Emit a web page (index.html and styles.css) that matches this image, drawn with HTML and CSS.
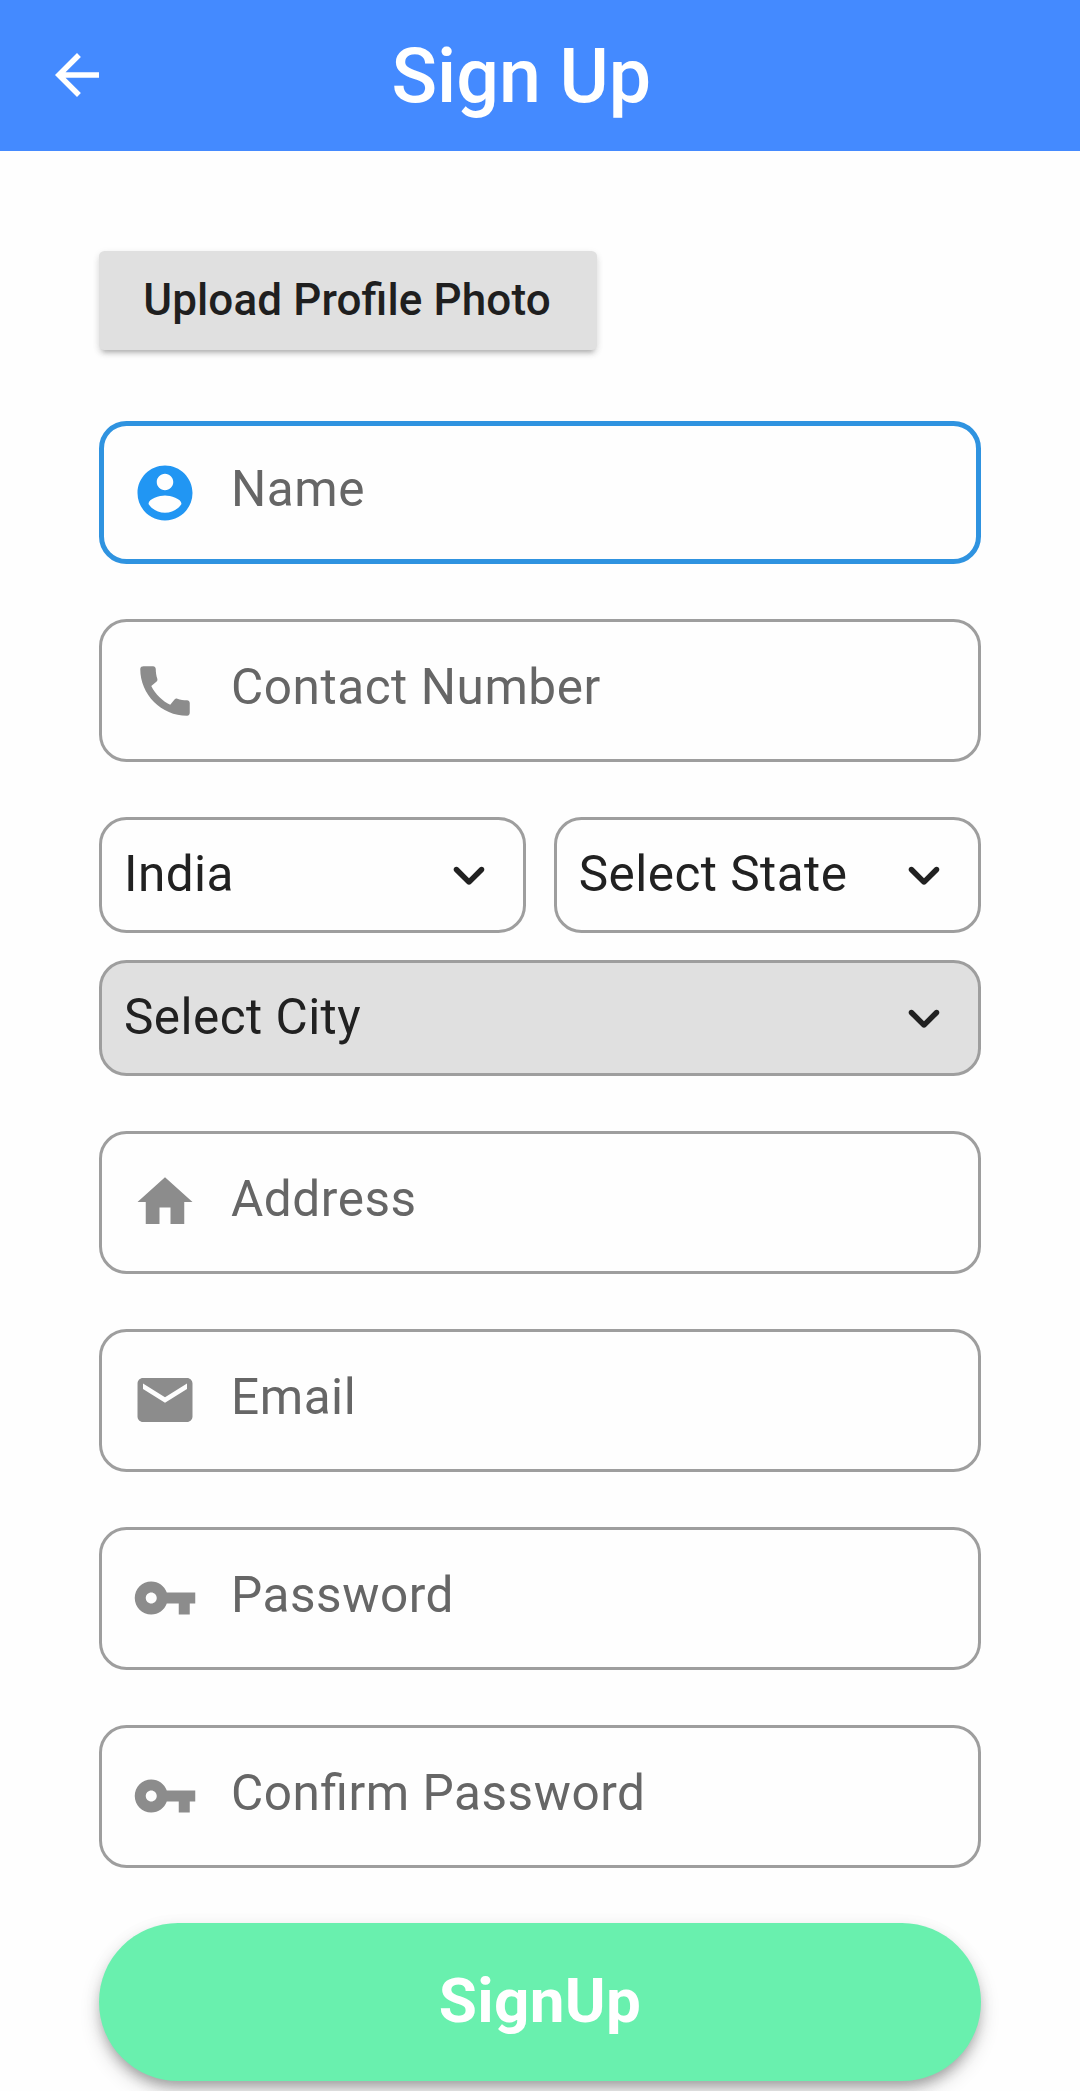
FILE: index.html
```html
<!DOCTYPE html>
<html lang="en">
<head>
<meta charset="utf-8">
<title>Sign Up</title>
<link rel="stylesheet" href="styles.css">
</head>
<body>
<header class="app-bar">
  <svg class="icon back" viewBox="0 0 24 24"><path d="M20 11H7.83l5.59-5.59L12 4l-8 8 8 8 1.41-1.41L7.83 13H20v-2z"/></svg>
  <h1 class="title">Sign Up</h1>
</header>
<main class="form">
  <button class="upload">Upload Profile Photo</button>
  <label class="field focused">
    <svg class="icon" viewBox="0 0 24 24"><path d="M12 2C6.48 2 2 6.48 2 12s4.48 10 10 10 10-4.48 10-10S17.52 2 12 2zm0 3c1.66 0 3 1.34 3 3s-1.34 3-3 3-3-1.34-3-3 1.34-3 3-3zm0 14.2c-2.5 0-4.71-1.28-6-3.22.03-1.99 4-3.08 6-3.08 1.99 0 5.97 1.09 6 3.08-1.29 1.94-3.5 3.22-6 3.22z"/></svg>
    <span class="hint">Name</span>
  </label>
  <label class="field">
    <svg class="icon" viewBox="0 0 24 24"><path d="M20.01 15.38c-1.23 0-2.42-.2-3.53-.56-.35-.12-.74-.03-1.01.24l-1.57 1.97c-2.83-1.35-5.48-3.9-6.89-6.83l1.95-1.66c.27-.28.35-.67.24-1.02-.37-1.11-.56-2.3-.56-3.53 0-.54-.45-.99-.99-.99H4.19C3.65 3 3 3.24 3 3.99 3 13.28 10.73 21 20.01 21c.71 0 .99-.63.99-1.18v-3.45c0-.54-.45-.99-.99-.99z"/></svg>
    <span class="hint">Contact Number</span>
  </label>
  <div class="region">
    <div class="select"><span class="value">India</span><svg class="icon" viewBox="0 0 24 24"><path d="M8.12 9.29L12 13.17l3.88-3.88c.39-.39 1.02-.39 1.41 0 .39.39.39 1.02 0 1.41l-4.59 4.59c-.39.39-1.02.39-1.41 0L6.7 10.7c-.39-.39-.39-1.02 0-1.41.39-.38 1.03-.39 1.42 0z"/></svg></div>
    <div class="select"><span class="value">Select State</span><svg class="icon" viewBox="0 0 24 24"><path d="M8.12 9.29L12 13.17l3.88-3.88c.39-.39 1.02-.39 1.41 0 .39.39.39 1.02 0 1.41l-4.59 4.59c-.39.39-1.02.39-1.41 0L6.7 10.7c-.39-.39-.39-1.02 0-1.41.39-.38 1.03-.39 1.42 0z"/></svg></div>
    <div class="select disabled"><span class="value">Select City</span><svg class="icon" viewBox="0 0 24 24"><path d="M8.12 9.29L12 13.17l3.88-3.88c.39-.39 1.02-.39 1.41 0 .39.39.39 1.02 0 1.41l-4.59 4.59c-.39.39-1.02.39-1.41 0L6.7 10.7c-.39-.39-.39-1.02 0-1.41.39-.38 1.03-.39 1.42 0z"/></svg></div>
  </div>
  <label class="field">
    <svg class="icon" viewBox="0 0 24 24"><path d="M10 20v-6h4v6h5v-8h3L12 3 2 12h3v8z"/></svg>
    <span class="hint">Address</span>
  </label>
  <label class="field">
    <svg class="icon" viewBox="0 0 24 24"><path d="M20 4H4c-1.1 0-1.99.9-1.99 2L2 18c0 1.1.9 2 2 2h16c1.1 0 2-.9 2-2V6c0-1.1-.9-2-2-2zm0 4l-8 5-8-5V6l8 5 8-5v2z"/></svg>
    <span class="hint">Email</span>
  </label>
  <label class="field">
    <svg class="icon" viewBox="0 0 24 24"><path d="M12.65 10C11.83 7.67 9.61 6 7 6c-3.31 0-6 2.69-6 6s2.69 6 6 6c2.61 0 4.83-1.67 5.65-4H17v4h4v-4h2v-4H12.65zM7 14c-1.1 0-2-.9-2-2s.9-2 2-2 2 .9 2 2-.9 2-2 2z"/></svg>
    <span class="hint">Password</span>
  </label>
  <label class="field">
    <svg class="icon" viewBox="0 0 24 24"><path d="M12.65 10C11.83 7.67 9.61 6 7 6c-3.31 0-6 2.69-6 6s2.69 6 6 6c2.61 0 4.83-1.67 5.65-4H17v4h4v-4h2v-4H12.65zM7 14c-1.1 0-2-.9-2-2s.9-2 2-2 2 .9 2 2-.9 2-2 2z"/></svg>
    <span class="hint">Confirm Password</span>
  </label>
  <button class="submit">SignUp</button>
</main>
</body>
</html>
```
FILE: styles.css
```css
* { box-sizing: border-box; }
body {
  margin: 0;
  height: 2091px;
  overflow: hidden;
  background: #fefefe;
  font-family: Roboto, sans-serif;
  font-size: 49.5px;
  letter-spacing: 0.45px;
  font-feature-settings: "liga" 1;
}
.icon { width: 66px; height: 66px; flex: none; fill: currentColor; }
.app-bar {
  display: flex;
  align-items: center;
  height: 151px;
  padding: 0 0 2px 44px;
  background: #448aff;
  color: #fff;
}
.title {
  margin: 3px 0 0 281.5px;
  font-size: 75.3px;
  line-height: 90px;
  font-weight: 500;
  letter-spacing: 0;
}
.form {
  display: flex;
  flex-direction: column;
  gap: 55px;
  padding: 100px 99px 0;
}
.upload {
  align-self: flex-start;
  width: 498px;
  height: 99px;
  margin-bottom: 16px;
  padding: 0 2px 1px 0;
  border: 0;
  border-radius: 5.5px;
  background: #e0e0e0;
  color: #1f1f1f;
  font: 500 44px/52px Roboto, sans-serif;
  letter-spacing: 0.12px;
  font-feature-settings: "liga" 1;
  box-shadow: 0 6px 4px -4px rgba(0,0,0,.18), 0 4px 6px rgba(0,0,0,.12), 0 2px 8px rgba(0,0,0,.06);
}
.field {
  display: flex;
  align-items: center;
  height: 143px;
  padding-left: 30px;
  border: 3px solid #9e9e9e;
  border-radius: 27.5px;
  color: #8c8c8c;
}
.field.focused {
  padding-left: 28px;
  border: 5px solid #2f93e0;
  color: #2196f3;
}
.hint {
  margin: 0 0 7px 33px;
  line-height: 58px;
  letter-spacing: 0.55px;
  color: #666;
}
.region {
  display: grid;
  grid-template-columns: 1fr 1fr;
  gap: 27.5px;
}
.select {
  display: flex;
  align-items: center;
  justify-content: space-between;
  height: 115.5px;
  padding: 0 21px 0 22px;
  border: 3px solid #9e9e9e;
  border-radius: 27.5px;
  color: #212121;
}
.select.disabled { grid-column: 1 / -1; background: #e0e0e0; }
.value { line-height: 58px; margin-bottom: 2px; }
.submit {
  height: 158px;
  padding: 0 0 2px;
  border: 0;
  border-radius: 82px;
  background: #69f0ae;
  color: #fff;
  font: 700 62px/70px Roboto, sans-serif;
  letter-spacing: 0.3px;
  box-shadow: 0 8px 12px -3px rgba(0,0,0,.24), 0 10px 20px rgba(0,0,0,.16), 0 3px 20px rgba(0,0,0,.04);
}
```
